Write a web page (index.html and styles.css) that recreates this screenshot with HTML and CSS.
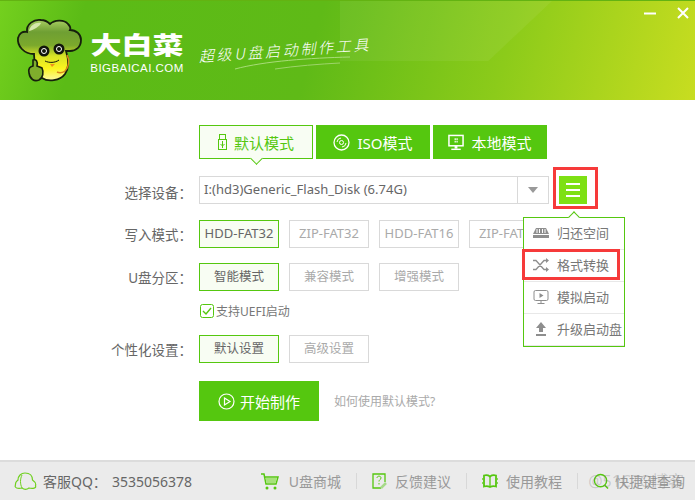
FILE: index.html
```html
<!DOCTYPE html>
<html lang="zh-CN">
<head>
    <meta charset="UTF-8">
    <title>大白菜</title>
    <link rel="stylesheet" href="styles.css">
</head>
<body>
<div class="app">
    <header class="top">
        <svg class="logo" width="80" height="80" viewBox="0 0 80 80">
            <defs>
                <linearGradient id="veg" x1="0" y1="0" x2="0" y2="1">
                    <stop offset="0" stop-color="#a9cf63"/>
                    <stop offset="0.2" stop-color="#6f9f33"/>
                    <stop offset="0.42" stop-color="#7ba92c"/>
                    <stop offset="0.6" stop-color="#d8e326"/>
                    <stop offset="0.8" stop-color="#fbf41e"/>
                    <stop offset="1" stop-color="#fdf8a0"/>
                </linearGradient>
            </defs>
            <path d="M24 44C14 44 7 36 8 28C9 23 13 21 17 22C16 14 24 9 31 10C35 10 38 12 40 14C44 10 54 9 58 14C60 16 61 18 60 20C66 20 71 24 71 30C71 37 66 41 60 41L56 41C59 50 59 58 55 64C50 71 38 72 32 68C26 62 24 52 24 44Z" fill="url(#veg)" stroke="#16200c" stroke-width="1.800"/>
            <path d="M19 21C20 15 26 12 31 13C30 16 24 20 19 21Z" fill="#d6e8ad"/>
            <circle cx="34" cy="41" r="5.500" fill="#12160b"/>
            <circle cx="49" cy="39" r="5.500" fill="#12160b"/>
            <circle cx="34" cy="41" r="2.500" fill="none" stroke="#fff"/>
            <circle cx="49" cy="39" r="2.500" fill="none" stroke="#fff"/>
            <path d="M35 51C39 53 45 53 49 50" stroke="#12160b" stroke-width="1" fill="none"/>
            <path d="M40 54L45 54L42 57Z" fill="#f0901c"/>
            <path d="M57 45C60 50 59 57 55 61C52 63 49 63 47 62" stroke="#d9881c" stroke-width="1.500" fill="none"/>
            <path d="M19 63C18 58 20 57 23 56L23 50C26 49 28 51 27 56L32 58C34 62 33 68 29 70C24 72 20 69 19 63Z" fill="#7fae2c" stroke="#16200c" stroke-width="1.600"/>
        </svg>
        <div class="brand">
            <div class="brand-name">大白菜</div>
            <div class="brand-url">BIGBAICAI.COM</div>
        </div>
        <div class="slogan">超级U盘启动制作工具</div>
        <svg class="swoosh" width="120" height="16" viewBox="0 0 120 16">
            <path d="M0 13C30 5 75 2 115 1" stroke="#a8dc78" stroke-width="1" fill="none"/>
            <path d="M40 13C60 10 85 8 105 7" stroke="#9dd46a" stroke-width="1" fill="none"/>
        </svg>
        <div class="win-btns">
            <svg width="12" height="12" viewBox="0 0 12 12"><path d="M0 6.500H12" stroke="#fff" stroke-width="2"/></svg>
            <svg width="12" height="12" viewBox="0 0 12 12"><path d="M1 1L11 11M11 1L1 11" stroke="#fff" stroke-width="2"/></svg>
        </div>
    </header>

    <main class="content">
        <div class="tabs">
            <div class="tab active">
                <svg width="9" height="16" viewBox="0 0 9 16"><rect x="0.500" y="5.500" width="8" height="10" fill="none" stroke="#55c70f"/><rect x="1.500" y="0.500" width="6" height="5" fill="none" stroke="#55c70f"/><path d="M4.500 7V14M2.500 10L4.500 12L6.500 10" stroke="#55c70f" fill="none"/></svg>
                默认模式
            </div>
            <div class="tab">
                <svg width="17" height="17" viewBox="0 0 17 17"><circle cx="8.500" cy="8.500" r="7.500" fill="none" stroke="#fff" stroke-width="1.300"/><circle cx="8.500" cy="8.500" r="2" fill="none" stroke="#fff"/><path d="M4 8A4.500 4.500 0 0 1 8 4M13 9A4.500 4.500 0 0 1 9 13" fill="none" stroke="#fff"/></svg>
                ISO模式
            </div>
            <div class="tab">
                <svg width="16" height="17" viewBox="0 0 17 17"><rect x="1" y="1" width="15" height="11" fill="none" stroke="#fff" stroke-width="1.600"/><rect x="7" y="12" width="3" height="3" fill="#fff"/><rect x="3.500" y="15" width="10" height="1.500" fill="#fff"/><path d="M7 4H8.300V5.800H7ZM9 4H10.300V5.800H9ZM7 6.600H8.300V8.400H7ZM9 6.600H10.300V8.400H9Z" fill="#fff"/></svg>
                本地模式
            </div>
        </div>

        <div class="row device-row">
            <div class="label">选择设备：</div>
            <div class="select">
                <div class="select-text">I:(hd3)Generic_Flash_Disk (6.74G)</div>
                <div class="select-arrow"><span class="caret"></span></div>
            </div>
            <div class="menu-btn">
                <span class="bar"></span><span class="bar"></span><span class="bar"></span>
            </div>
        </div>

        <div class="row write-row">
            <div class="label">写入模式：</div>
            <div class="opts">
                <div class="opt on">HDD-FAT32</div>
                <div class="opt">ZIP-FAT32</div>
                <div class="opt">HDD-FAT16</div>
                <div class="opt">ZIP-FAT16</div>
            </div>
        </div>

        <div class="row part-row">
            <div class="label">U盘分区：</div>
            <div class="opts">
                <div class="opt on dark">智能模式</div>
                <div class="opt">兼容模式</div>
                <div class="opt">增强模式</div>
            </div>
        </div>

        <div class="uefi">
            <svg width="14" height="14" viewBox="0 0 14 14"><rect x="0.500" y="0.500" width="13" height="13" rx="2" fill="#fff" stroke="#55c70f"/><path d="M3 7L6 10L11 4" stroke="#55c70f" stroke-width="1.400" fill="none"/></svg>
            支持UEFI启动
        </div>

        <div class="row custom-row">
            <div class="label">个性化设置：</div>
            <div class="opts">
                <div class="opt on dark">默认设置</div>
                <div class="opt">高级设置</div>
            </div>
        </div>

        <div class="start-row">
            <div class="start-btn">
                <svg width="17" height="17" viewBox="0 0 17 17"><circle cx="8.500" cy="8.500" r="7.500" fill="none" stroke="#fff" stroke-width="1.200"/><path d="M6.500 5L12 8.500L6.500 12Z" fill="none" stroke="#fff" stroke-width="1.200"/></svg>
                开始制作
            </div>
            <div class="help">如何使用默认模式?</div>
        </div>

        <div class="mark-box top-mark"></div>

        <div class="popup">
            <span class="popup-tip"></span>
            <div class="popup-item">
                <svg width="16" height="12" viewBox="0 0 16 12"><path d="M3 1H13L16 7V11H0V7Z" fill="#8e8e8e"/><path d="M4 2V6M6.500 2V6M9.500 2V6M12 2V6" stroke="#fff"/><path d="M0 7.500H16" stroke="#fff"/></svg>
                归还空间
            </div>
            <div class="popup-item">
                <svg width="16" height="14" viewBox="0 0 16 14"><path d="M0 2.500H3L11 11.500H14M0 11.500H3L11 2.500H14" stroke="#8e8e8e" stroke-width="1.300" fill="none"/><path d="M13 0L16 2.500L13 5ZM13 9L16 11.500L13 14Z" fill="#8e8e8e"/></svg>
                格式转换
            </div>
            <div class="popup-item">
                <svg width="15" height="14" viewBox="0 0 15 14"><rect x="0.500" y="0.500" width="14" height="10" rx="1.500" fill="none" stroke="#8e8e8e"/><path d="M6 3L10 5.500L6 8Z" fill="#8e8e8e"/><path d="M7.500 11V13M4 13.500H11" stroke="#8e8e8e"/></svg>
                模拟启动
            </div>
            <div class="popup-item">
                <svg width="12" height="14" viewBox="0 0 12 14"><path d="M6 0L11 6H8V10H4V6H1Z" fill="#8e8e8e"/><rect x="1" y="12" width="10" height="2" fill="#8e8e8e"/></svg>
                升级启动盘
            </div>
            <div class="mark-box item-mark"></div>
        </div>
    </main>

    <footer class="bottom">
        <div class="qq">
            <svg width="23" height="18" viewBox="0 0 23 18"><path d="M8 16C4 17 0 16 1.500 13C1 10 3 9 4 8C4 4 7 1 11 1C16 1 18.500 4 18.500 8C20 9 22.500 11 21.500 14C22.500 16 19 17 15 16C13 17.500 10 17.500 8 16Z" fill="none" stroke="#6fd01f" stroke-width="1.200"/><path d="M8 3C6 7 6 12 8 16" fill="none" stroke="#6fd01f"/></svg>
            <span class="qq-label">客服QQ：</span>
            <span class="qq-num">3535056378</span>
        </div>
        <div class="links">
            <div class="link cart">
                <svg width="18" height="17" viewBox="0 0 18 17"><path d="M0 1H3L5 11H15L17 4H4" fill="none" stroke="#55c70f" stroke-width="1.500"/><path d="M4.500 5H16L14.500 10H5.500Z" fill="#a7e27b"/><circle cx="6" cy="15" r="1.500" fill="#55c70f"/><circle cx="14" cy="15" r="1.500" fill="#55c70f"/></svg>
                U盘商城
            </div>
            <i class="sep"></i>
            <div class="link">
                <svg width="15" height="16" viewBox="0 0 15 16"><path d="M9 15H1V1H13V9" fill="none" stroke="#55c70f" stroke-width="1.300"/><path d="M5 5C5 2.500 9 2.500 9 5C9 6.500 7 6.500 7 8.500M7 10V11.500" fill="none" stroke="#55c70f"/><path d="M9 15L14 10" stroke="#a7d98a" stroke-width="2.500"/></svg>
                反馈建议
            </div>
            <i class="sep"></i>
            <div class="link">
                <svg width="16" height="14" viewBox="0 0 16 14"><path d="M2 1.500C4 1 6 1 8 2.500C10 1 12 1 14 1.500V12.500C12 12 10 12 8 13C6 12 4 12 2 12.500Z" fill="none" stroke="#55c70f" stroke-width="1.800"/><path d="M0 4V6M0 8V10M16 4V6M16 8V10M8 3V12" stroke="#55c70f" stroke-width="1.300"/></svg>
                使用教程
            </div>
            <i class="sep"></i>
            <div class="link search">
                <svg width="16" height="17" viewBox="0 0 17 17"><circle cx="8" cy="7.500" r="6.500" fill="none" stroke="#55c70f" stroke-width="1.500"/><path d="M12.500 12.500L16 16" stroke="#55c70f" stroke-width="1.600"/></svg>
                快捷键查询
            </div>
        </div>
        <div class="watermark">@51CTO博客</div>
    </footer>
</div>
</body>
</html>
```

FILE: styles.css
```css
* {
    box-sizing: border-box;
}

body {
    margin: 0;
    font-family: "Noto Sans", "Noto Sans CJK SC", sans-serif;
    background-color: #fff;
}

.app {
    width: 695px;
    height: 500px;
    display: flex;
    flex-direction: column;
    overflow: hidden;
}

.top {
    position: relative;
    height: 100px;
    flex: none;
    display: flex;
    background: linear-gradient(105deg, #74d01e 0%, #5bbb16 12%, #5fba17 45%, #8ccb1a 72%, #c8dd20 100%);
    border-top: 1px solid #63b312;
    color: #fff;
}

.top::before {
    content: "";
    position: absolute;
    left: 340px;
    top: 0;
    width: 212px;
    height: 60px;
    background: rgba(255, 255, 255, 0.06);
    clip-path: polygon(0 100%, 70% 100%, 100% 0, 0 0);
}

.logo {
    flex: none;
    margin: 9px 0 0 10px;
}

.brand {
    margin-top: 31px;
    width: 94px;
    text-align: center;
}

.brand-name {
    font-family: "Noto Sans CJK SC", sans-serif;
    font-size: 31px;
    font-weight: 900;
    line-height: 24px;
    transform: scaleY(0.78);
}

.brand-url {
    margin-top: 5px;
    font-family: "Liberation Sans", sans-serif;
    font-size: 11.500px;
    line-height: 14px;
    letter-spacing: 0.45px;
    white-space: nowrap;
}

.slogan {
    margin: 37px 0 0 16px;
    height: 24px;
    font-family: "Noto Sans CJK SC", sans-serif;
    font-size: 15px;
    font-weight: 300;
    line-height: 24px;
    letter-spacing: 2.700px;
    white-space: nowrap;
    transform: rotate(-4deg) skewX(-14deg);
}

.swoosh {
    position: absolute;
    left: 235px;
    top: 55px;
}

.win-btns {
    position: absolute;
    top: 6px;
    right: 6px;
    display: flex;
    gap: 21px;
}

.content {
    position: relative;
    flex: 1;
    padding-top: 25px;
}

.tabs {
    display: flex;
    gap: 3px;
    margin-left: 199px;
}

.tab {
    position: relative;
    width: 114px;
    height: 34px;
    display: flex;
    align-items: center;
    justify-content: center;
    gap: 7px;
    background-color: #55c70f;
    color: #fff;
    font-size: 15px;
}

.tab.active {
    background-color: #f8fdf3;
    border: 1px solid #55c70f;
    color: #55c70f;
}

.tab.active::after {
    content: "";
    position: absolute;
    left: 50%;
    bottom: -5px;
    width: 8px;
    height: 8px;
    margin-left: -4px;
    background-color: #f8fdf3;
    border-right: 1px solid #55c70f;
    border-bottom: 1px solid #55c70f;
    transform: rotate(45deg);
}

.row {
    display: flex;
    align-items: center;
}

.label {
    width: 192px;
    flex: none;
    margin-right: 7px;
    padding-bottom: 1px;
    text-align: right;
    color: #666;
    font-size: 13.500px;
    white-space: nowrap;
}

.device-row {
    margin-top: 17px;
}

.device-row .label {
    padding: 3px 0 0;
}

.write-row {
    margin-top: 16px;
}

.write-row .opt {
    font-size: 13px;
}

.part-row {
    margin-top: 15px;
}

.custom-row {
    margin-top: 16px;
}

.select {
    width: 350px;
    height: 28px;
    display: flex;
    border: 1px solid #d9d9d9;
}

.select-text {
    flex: 1;
    padding-left: 4px;
    color: #666;
    font-size: 13px;
    line-height: 25px;
    letter-spacing: 0.03px;
    white-space: nowrap;
}

.select-arrow {
    width: 31px;
    display: flex;
    align-items: center;
    justify-content: center;
    border-left: 1px solid #d9d9d9;
}

.caret {
    width: 0;
    height: 0;
    border-style: solid;
    border-width: 6px 5px 0;
    border-color: #999 transparent transparent;
}

.menu-btn {
    width: 28px;
    height: 28px;
    margin-left: 10px;
    display: flex;
    flex-direction: column;
    align-items: center;
    justify-content: center;
    gap: 4px;
    background-color: #7ee014;
}

.bar {
    width: 14px;
    height: 2px;
    background-color: #fff;
}

.opts {
    display: flex;
    gap: 10px;
}

.opt {
    width: 80px;
    height: 28px;
    border: 1px solid #d9d9d9;
    color: #aaa;
    font-size: 12.500px;
    line-height: 25px;
    text-align: center;
    white-space: nowrap;
}

.opt.on {
    border-color: #55c70f;
    background-color: #f8fdf3;
    color: #666;
}

.uefi {
    display: flex;
    align-items: center;
    gap: 2px;
    height: 16px;
    margin: 12px 0 0 200px;
    color: #777;
    font-size: 12px;
}

.start-row {
    display: flex;
    align-items: center;
    margin: 18px 0 0 199px;
}

.start-btn {
    width: 120px;
    height: 40px;
    display: flex;
    align-items: center;
    justify-content: center;
    gap: 5px;
    background-color: #55c70f;
    color: #fff;
    font-size: 15px;
}

.help {
    margin-left: 15px;
    color: #aaa;
    font-size: 12px;
}

.mark-box {
    position: absolute;
    border: 3px solid #f63a3a;
}

.top-mark {
    left: 553px;
    top: 67px;
    width: 45px;
    height: 42px;
}

.popup {
    position: absolute;
    left: 523px;
    top: 117px;
    width: 102px;
    height: 130px;
    background-color: #fff;
    border: 1px solid #55c70f;
}

.popup-tip {
    position: absolute;
    left: 46px;
    top: -5px;
    width: 8px;
    height: 8px;
    background-color: #fff;
    border-left: 1px solid #55c70f;
    border-top: 1px solid #55c70f;
    transform: rotate(45deg);
}

.popup-item {
    height: 32px;
    display: flex;
    align-items: center;
    padding: 0 0 2px 5px;
    border-bottom: 1px solid #e8e8e8;
    color: #777;
    font-size: 13px;
    white-space: nowrap;
}

.popup-item:last-of-type {
    border-bottom: none;
}

.popup-item svg {
    width: 24px;
    flex: none;
    margin-right: 4px;
}

.item-mark {
    left: -2px;
    top: 31px;
    width: 98px;
    height: 31px;
}

.bottom {
    position: relative;
    height: 40px;
    flex: none;
    display: flex;
    align-items: center;
    justify-content: space-between;
    padding: 0 10px 0 14px;
    background-color: #ebebeb;
    border-top: 2px solid #dcdcdc;
}

.qq {
    display: flex;
    align-items: center;
    color: #666;
    font-size: 14px;
}

.qq svg {
    margin-right: 6px;
}

.qq-num {
    margin-left: 5px;
}

.links {
    display: flex;
    align-items: center;
    color: #999;
    font-size: 14px;
}

.link {
    display: flex;
    align-items: center;
    gap: 8px;
    white-space: nowrap;
}

.cart {
    gap: 10px;
}

.search {
    gap: 6px;
}

.sep {
    width: 1px;
    height: 16px;
    margin: 0 15px;
    background-color: #d8d8d8;
}

.watermark {
    position: absolute;
    right: 11px;
    top: 9px;
    color: rgba(120, 120, 120, 0.3);
    font-size: 16px;
    line-height: 20px;
    white-space: nowrap;
}
```
